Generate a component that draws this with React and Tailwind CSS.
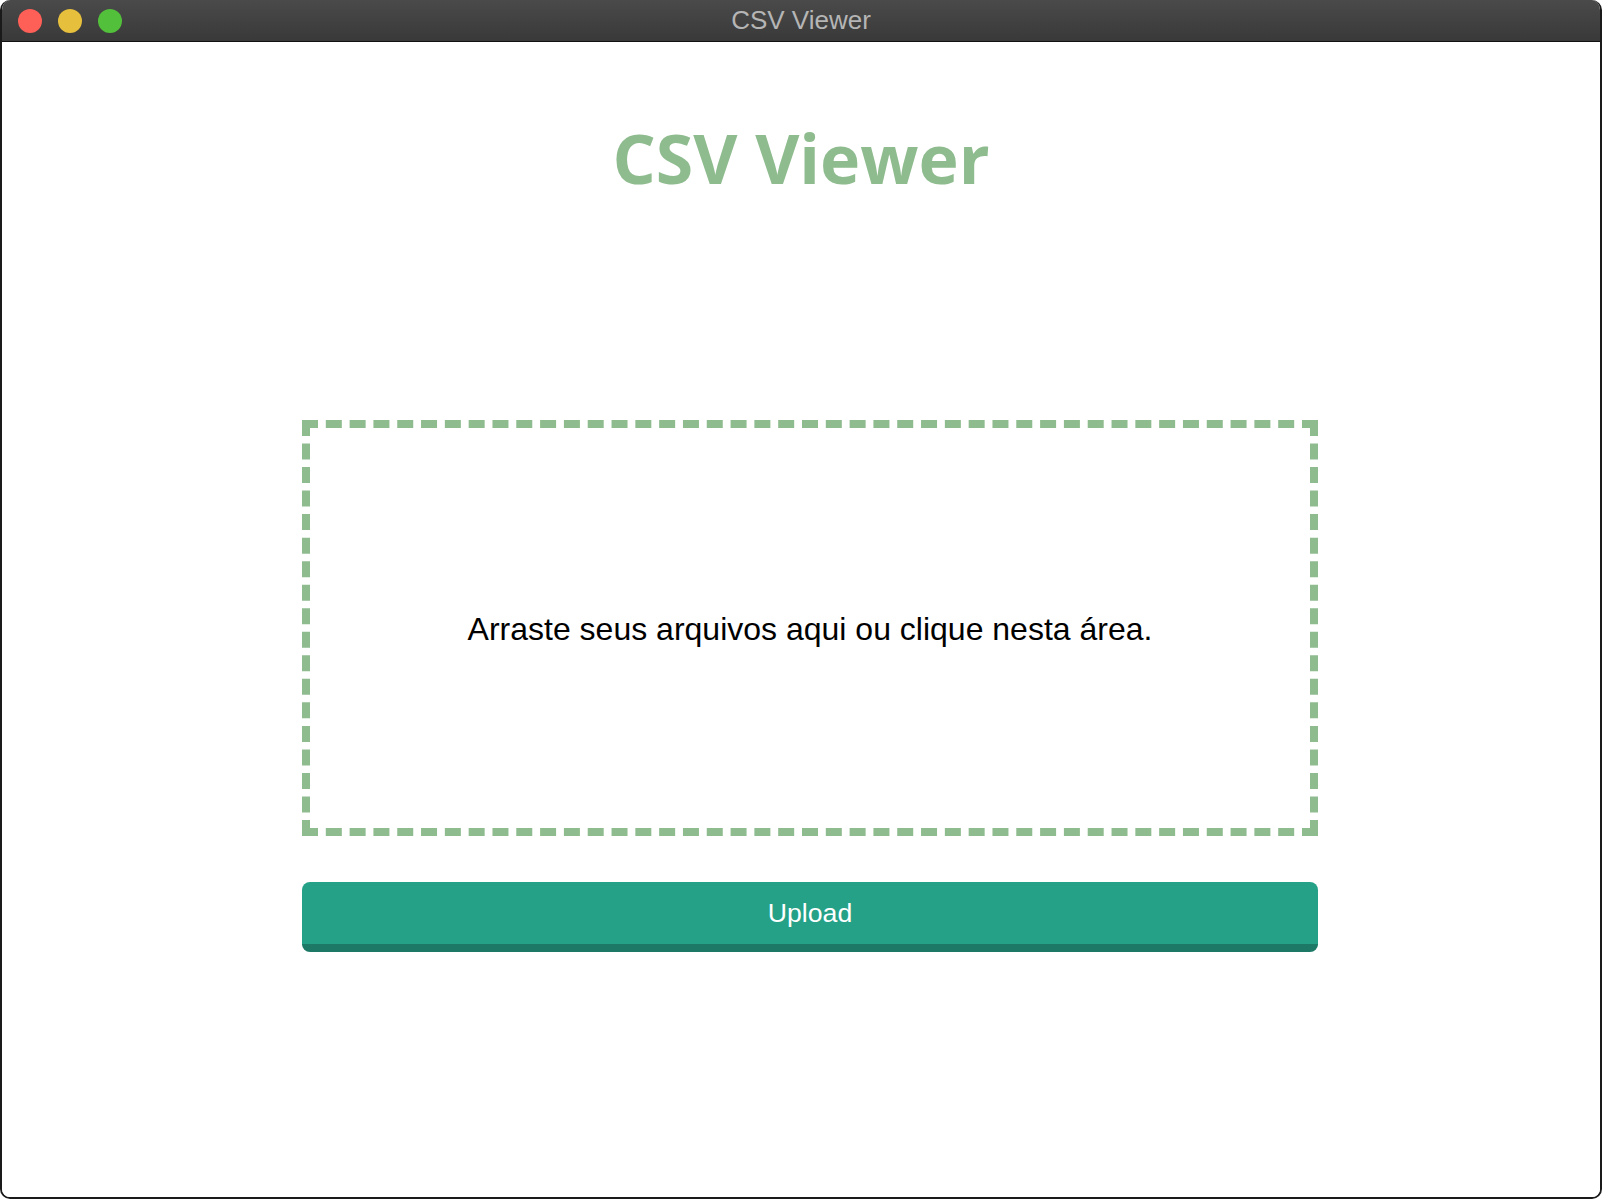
import React from "react";

const App = () => {
  return (
    <div className="w-[1604px] h-[1200px] bg-white">
      <div className="w-[1602px] h-[1199px] flex flex-col border-x-2 border-b-2 border-[#1a1a1a] rounded-t-[10px] rounded-b-[10px] overflow-hidden">
        {/* barra de título */}
        <div className="h-[42px] shrink-0 grid grid-cols-[1fr_auto_1fr] items-center bg-linear-to-b from-[#4a4a4a] to-[#393939] border-b border-[#111]">
          <div className="flex items-center gap-4 pl-4">
            <span className="w-6 h-6 rounded-full bg-[#fe5f57]" />
            <span className="w-6 h-6 rounded-full bg-[#e6bf3d]" />
            <span className="w-6 h-6 rounded-full bg-[#53c03b]" />
          </div>
          <div className="text-[26px] leading-[41px] text-[#b5b5b5] font-['Liberation_Sans',Arial,sans-serif]">
            CSV Viewer
          </div>
          <div />
        </div>

        {/* conteúdo */}
        <div className="flex-1 bg-white flex flex-col">
          <h1 className="mt-[82px] w-full text-center text-[68px] leading-[68px] font-bold text-[#8fbc8f] font-['Open_Sans',sans-serif]">
            CSV Viewer
          </h1>

          <div className="pl-[300px] mt-[228px] flex flex-col">
            <div className="w-[1016px] h-[416px] border-8 border-dashed border-[#8fbc8f] flex items-center justify-center pt-[2px]">
              <p className="text-[32px] text-black font-['Liberation_Sans',Arial,sans-serif]">
                Arraste seus arquivos aqui ou clique nesta área.
              </p>
            </div>

            <button className="mt-[46px] w-[1016px] h-[70px] rounded-[8px] bg-[#24a187] border-b-8 border-[#1d7966] text-white text-[26.67px] font-['Liberation_Sans',Arial,sans-serif]">
              Upload
            </button>
          </div>
        </div>
      </div>
    </div>
  );
};

export default App;
